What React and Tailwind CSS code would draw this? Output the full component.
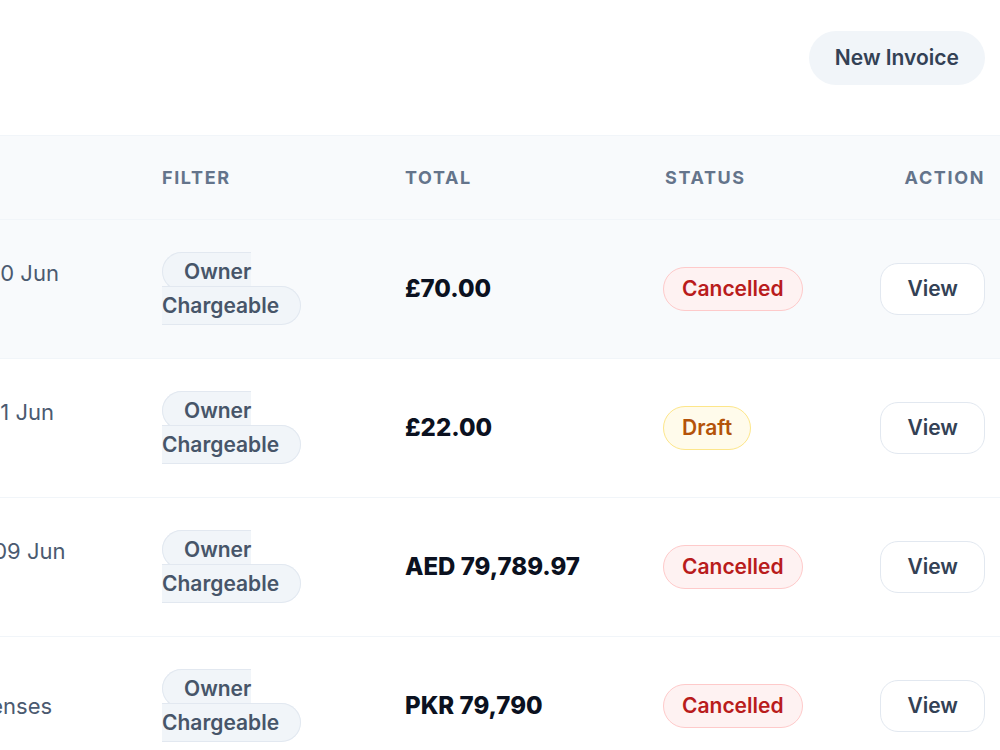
import React from "react";

const invoices = [
  { period: "Period ending 20 Jun", ref: "INV-1042", total: "£70.00", status: "Cancelled", active: true },
  { period: "Period ending 21 Jun", ref: "INV-1043", total: "£22.00", status: "Draft" },
  { period: "Period ending: 09 Jun", ref: "INV-1044", total: "AED 79,789.97", status: "Cancelled" },
  { period: "Apartment Expenses", total: "PKR 79,790", status: "Cancelled" },
];

const statusStyles = {
  Cancelled: "bg-[#fef2f2] border-[#fecaca] text-[#b91c1c]",
  Draft: "bg-[#fffbeb] border-[#fde68a] text-[#b45309]",
};

const StatusBadge = ({ status }) => (
  <span
    className={`inline-block rounded-full border px-[18px] py-[6px] text-[21px] leading-[30px] font-semibold ${statusStyles[status]}`}
  >
    {status}
  </span>
);

const App = () => {
  return (
    <div
      className="h-[750px] w-[1000px] overflow-hidden bg-white text-[#0f172a]"
      style={{ fontFamily: "Inter, 'Noto Sans', sans-serif" }}
    >
      {/* top bar */}
      <div className="flex h-[135px] justify-end pt-[31px] pr-[15px]">
        <div>
          <button className="rounded-full bg-[#f1f5f9] px-[26px] py-[12px] text-[21px] leading-[30px] font-semibold text-[#334155]">
            New Invoice
          </button>
        </div>
      </div>

      {/* table, scrolled so the first column is partly hidden */}
      <div className="-ml-[172px] w-[1172px]">
        <div className="grid grid-cols-[334px_243px_258px_1fr_auto] items-center border-y border-[#f1f5f9] bg-[#f8fafc] pr-[15px] py-[28px] text-[18px] leading-[27px] font-bold uppercase tracking-[0.09em] text-[#64748b]">
          <div className="pl-[8px]">Period</div>
          <div>Filter</div>
          <div>Total</div>
          <div className="pl-[2px]">Status</div>
          <div className="text-right">Action</div>
        </div>

        {invoices.map((inv, i) => (
          <div
            key={i}
            className={`grid grid-cols-[334px_243px_258px_1fr_auto] items-center border-b border-[#f1f5f9] pr-[15px] py-[35px] ${
              inv.active ? "bg-[#f8fafc]" : "bg-white"
            }`}
          >
            <div className="pl-[8px] text-[22px] leading-[32px] text-[#4b5a70] whitespace-nowrap">
              <div>{inv.period}</div>
              {inv.ref && <div className="text-[18px] text-[#94a3b8]">{inv.ref}</div>}
            </div>
            <div className="w-[150px] text-[21px] leading-[34px] font-semibold text-[#475569]">
              <span className="rounded-full border border-[#e2e8f0] bg-[#f1f5f9] px-[21px] py-[6px]">
                Owner Chargeable
              </span>
            </div>
            <div className="text-[24px] leading-[30px] font-extrabold text-[#0b1120]">{inv.total}</div>
            <div>
              <StatusBadge status={inv.status} />
            </div>
            <div className="text-right">
              <button className="rounded-[18px] border border-[#e2e8f0] bg-white px-[26px] py-[10px] text-[21px] leading-[30px] font-semibold text-[#334155]">
                View
              </button>
            </div>
          </div>
        ))}
      </div>
    </div>
  );
};

export default App;
